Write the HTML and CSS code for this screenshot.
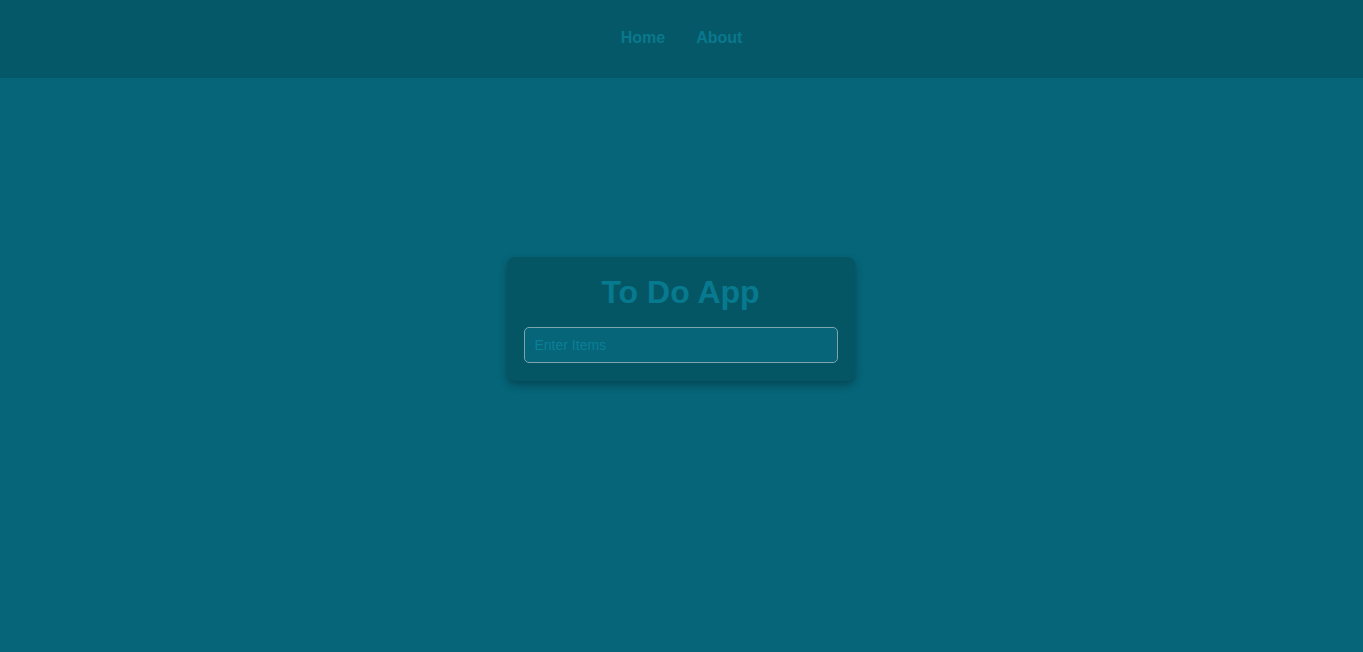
FILE: index.html
```html
<!DOCTYPE html>
<html lang="en">
<head>
<meta charset="utf-8">
<title>To Do App</title>
<link rel="stylesheet" href="styles.css">
</head>
<body>
<header class="topbar">
  <nav class="nav">
    <a class="nav-link" href="#">Home</a>
    <a class="nav-link" href="#">About</a>
  </nav>
</header>
<main class="main">
  <section class="card">
    <h1 class="title">To Do App</h1>
    <input class="item-input" type="text" placeholder="Enter Items">
  </section>
</main>
</body>
</html>
```
FILE: styles.css
```css
html, body {
  margin: 0;
  padding: 0;
  height: 100%;
}
body {
  background: #066579;
  font-family: "Liberation Sans", Arial, sans-serif;
}
.topbar {
  height: 78px;
  box-sizing: border-box;
  padding-bottom: 2px;
  background: #055868;
  display: flex;
  align-items: center;
  justify-content: center;
}
.nav {
  display: flex;
  gap: 31px;
}
.nav-link {
  color: #0a788c;
  font-weight: bold;
  font-size: 16px;
  text-decoration: none;
}
.main {
  display: flex;
  justify-content: center;
  padding-top: 179px;
  padding-right: 2px;
}
.card {
  width: 348px;
  box-sizing: border-box;
  padding: 17px 17px 18px;
  background: #055665;
  border-radius: 8px;
  box-shadow: 0 4px 8px rgba(0, 0, 0, 0.3);
  display: flex;
  flex-direction: column;
  gap: 16px;
}
.title {
  margin: 0;
  text-align: center;
  font-size: 32px;
  font-weight: bold;
  color: #077a8f;
}
.item-input {
  height: 36px;
  box-sizing: border-box;
  width: 100%;
  background: #066579;
  border: 1px solid #7fa4ad;
  border-radius: 5px;
  padding: 0 10px;
  font-family: "Liberation Sans", Arial, sans-serif;
  font-size: 14px;
  color: #0a8096;
  outline: none;
}
.item-input::placeholder {
  color: #0a8096;
}
```
